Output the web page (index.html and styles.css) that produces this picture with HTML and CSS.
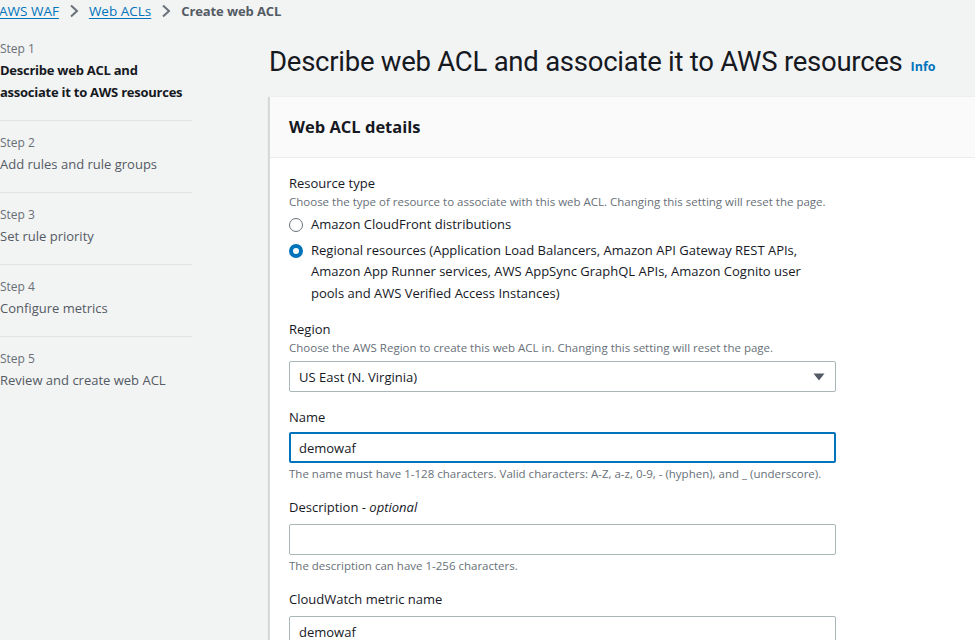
FILE: index.html
```html
<!DOCTYPE html>
<html lang="en">
<head>
<meta charset="utf-8">
<title>Create web ACL</title>
<link rel="stylesheet" href="styles.css">
</head>
<body>
<nav class="crumbs">
  <a class="crumb-link" href="#">AWS WAF</a>
  <svg class="chev" width="10" height="14" viewBox="0 0 10 14"><polyline points="2,1.5 8,7 2,12.5" fill="none" stroke="#687078" stroke-width="2"/></svg>
  <a class="crumb-link" href="#">Web ACLs</a>
  <svg class="chev" width="10" height="14" viewBox="0 0 10 14"><polyline points="2,1.5 8,7 2,12.5" fill="none" stroke="#687078" stroke-width="2"/></svg>
  <span class="crumb-current">Create web ACL</span>
</nav>
<div class="layout">
  <aside class="steps">
    <div class="step">
      <div class="step-label">Step 1</div>
      <div class="step-title active">Describe web ACL and associate it to AWS resources</div>
    </div>
    <div class="step">
      <div class="step-label">Step 2</div>
      <div class="step-title">Add rules and rule groups</div>
    </div>
    <div class="step">
      <div class="step-label">Step 3</div>
      <div class="step-title">Set rule priority</div>
    </div>
    <div class="step">
      <div class="step-label">Step 4</div>
      <div class="step-title">Configure metrics</div>
    </div>
    <div class="step last">
      <div class="step-label">Step 5</div>
      <div class="step-title">Review and create web ACL</div>
    </div>
  </aside>
  <main class="main">
    <div class="title-row">
      <h1 class="page-title">Describe web ACL and associate it to AWS resources</h1>
      <a class="info" href="#">Info</a>
    </div>
    <section class="card">
      <header class="card-header">Web ACL details</header>
      <div class="card-body">
        <div class="field">
          <div class="label">Resource type</div>
          <div class="desc">Choose the type of resource to associate with this web ACL. Changing this setting will reset the page.</div>
          <div class="radios">
            <div class="radio-row">
              <span class="radio"></span>
              <span class="radio-text">Amazon CloudFront distributions</span>
            </div>
            <div class="radio-row">
              <span class="radio checked"></span>
              <span class="radio-text">Regional resources (Application Load Balancers, Amazon API Gateway REST APIs, Amazon App Runner services, AWS AppSync GraphQL APIs, Amazon Cognito user pools and AWS Verified Access Instances)</span>
            </div>
          </div>
        </div>
        <div class="field">
          <div class="label">Region</div>
          <div class="desc">Choose the AWS Region to create this web ACL in. Changing this setting will reset the page.</div>
          <div class="control select after-desc">
            <span>US East (N. Virginia)</span>
            <svg class="caret" width="12" height="8" viewBox="0 0 12 8"><polygon points="0.5,0.5 11.5,0.5 6,7.5" fill="#545b64"/></svg>
          </div>
        </div>
        <div class="field">
          <div class="label">Name</div>
          <div class="control focused">demowaf</div>
          <div class="constraint">The name must have 1-128 characters. Valid characters: A-Z, a-z, 0-9, - (hyphen), and _ (underscore).</div>
        </div>
        <div class="field">
          <div class="label">Description - <i>optional</i></div>
          <div class="control"></div>
          <div class="constraint">The description can have 1-256 characters.</div>
        </div>
        <div class="field">
          <div class="label">CloudWatch metric name</div>
          <div class="control">demowaf</div>
        </div>
      </div>
    </section>
  </main>
</div>
</body>
</html>
```
FILE: styles.css
```css
html, body {
  margin: 0;
  padding: 0;
  background: #f2f3f3;
  overflow: hidden;
}
body {
  width: 975px;
  height: 640px;
  font-family: "Open Sans", "Noto Sans", sans-serif;
  font-size: 13px;
  color: #16191f;
}
.crumbs {
  display: flex;
  align-items: center;
  height: 22px;
  gap: 10px;
  font-size: 13.5px;
  margin-left: -1px;
}
.crumb-link {
  color: #0073bb;
  text-decoration: underline;
  text-underline-offset: 2px;
}
.crumb-current {
  color: #545b64;
  font-weight: 700;
  font-size: 13px;
  letter-spacing: -0.1px;
}
.chev { display: block; }

.layout {
  display: grid;
  grid-template-columns: 192px 1fr;
  column-gap: 77px;
}
.steps {
  padding-top: 5px;
}
.step {
  padding: 13px 0 16.5px;
  border-bottom: 1px solid #dfe3e3;
}
.step:first-child { padding-bottom: 17px; }
.step.last { border-bottom: none; }
.step-label {
  font-size: 12px;
  line-height: 18px;
  color: #687078;
}
.step-title {
  margin-top: 2px;
  font-size: 13px;
  line-height: 21.5px;
  color: #545b64;
}
.step-title.active {
  color: #16191f;
  font-weight: 700;
  letter-spacing: -0.25px;
}

.main {
  width: 760px;
}
.title-row {
  display: flex;
  align-items: baseline;
  gap: 8px;
  margin: 22px 0 17px;
  white-space: nowrap;
}
.page-title {
  margin: 0;
  font-family: Roboto, "Open Sans", sans-serif;
  font-weight: 400;
  font-size: 27.5px;
  line-height: 36px;
  letter-spacing: -0.25px;
  color: #16191f;
}
.info {
  font-size: 12.5px;
  font-weight: 700;
  color: #0073bb;
  text-decoration: none;
}
.card {
  background: #ffffff;
  border-left: 1px solid #d5dbdb;
  box-shadow: -1px 0 1px rgba(0, 28, 36, 0.12);
  min-height: 600px;
}
.card-header {
  background: #fafafa;
  padding: 19px 19px;
  line-height: 22px;
  font-size: 16.5px;
  font-weight: 700;
  border-bottom: 1px solid #eaeded;
}
.card-body {
  padding: 16px 19px;
  display: flex;
  flex-direction: column;
  gap: 16px;
}
.field {
  width: 547px;
  display: flex;
  flex-direction: column;
}
.label {
  line-height: 18px;
  font-size: 13px;
}
.desc, .constraint {
  font-size: 11.5px;
  line-height: 16px;
  color: #687078;
}
.desc { margin-top: 2px; }
.constraint { margin-top: 3px; }
.radios {
  margin-top: 4px;
  display: flex;
  flex-direction: column;
  gap: 4px;
}
.radio-row {
  display: flex;
  align-items: flex-start;
  gap: 8px;
}
.radio {
  flex: none;
  box-sizing: border-box;
  width: 14px;
  height: 14px;
  margin-top: 4px;
  border-radius: 50%;
  border: 1.5px solid #687078;
  background: #fff;
}
.radio.checked {
  border: 4px solid #0073bb;
}
.radio-text {
  line-height: 21.5px;
  font-size: 13px;
}
.control {
  box-sizing: border-box;
  height: 31px;
  margin-top: 8px;
  border: 1px solid #aab7b8;
  border-radius: 2px;
  padding: 0 9px;
  display: flex;
  align-items: center;
  background: #fff;
  font-size: 13px;
}
.control.after-desc { margin-top: 5px; }
.select {
  justify-content: space-between;
  padding-right: 10px;
}
.caret { display: block; }
.control.focused {
  margin-top: 6px;
  border: 2px solid #0073bb;
  padding-left: 8px;
}
```
